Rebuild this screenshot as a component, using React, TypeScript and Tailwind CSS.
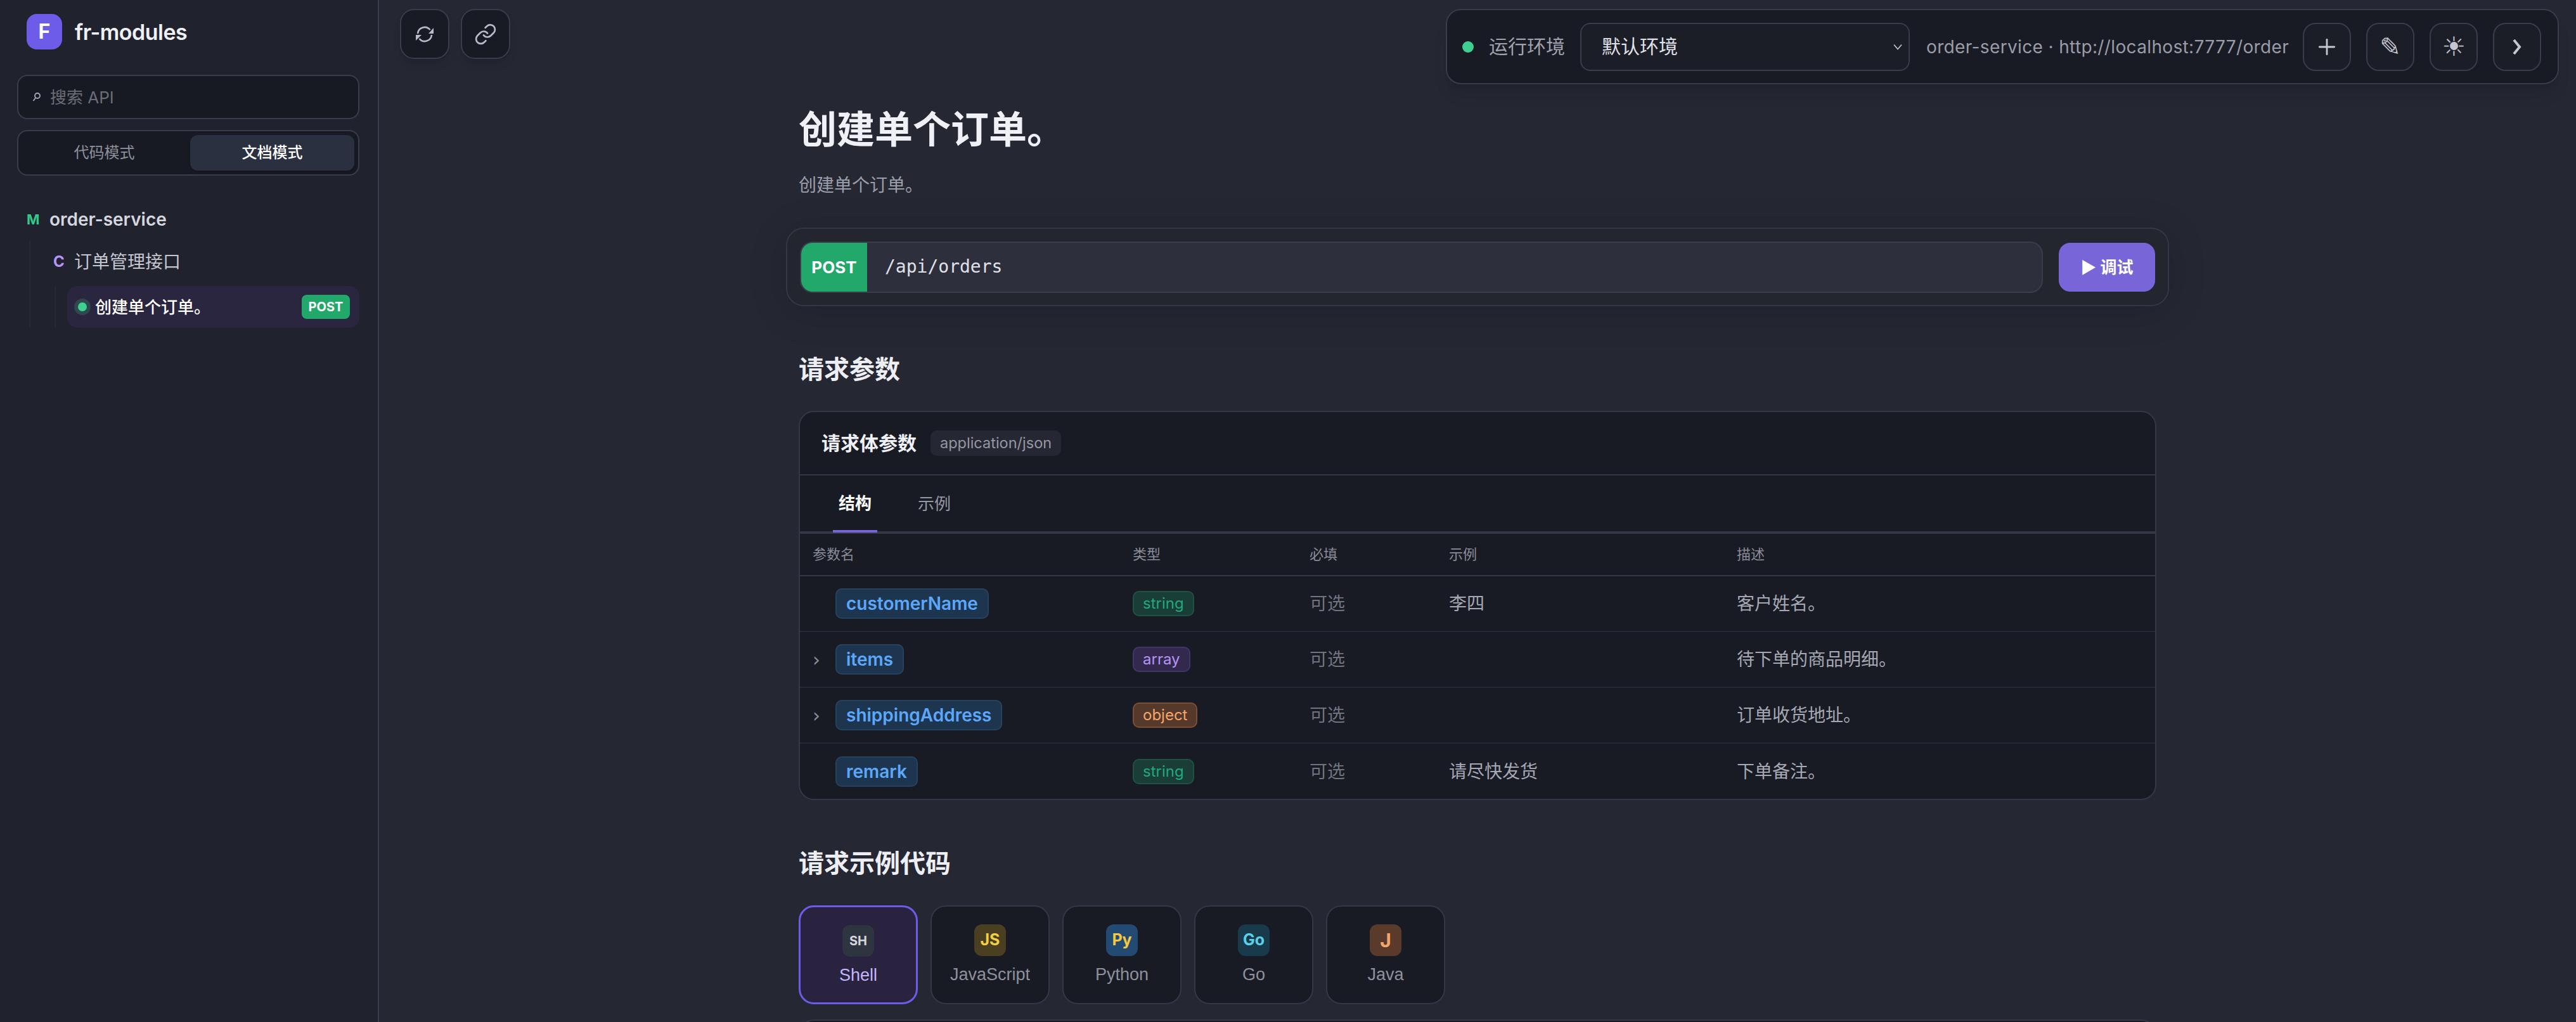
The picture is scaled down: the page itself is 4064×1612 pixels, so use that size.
import { Link, Plus } from "lucide-react";

const params = [
    { name: "customerName", type: "string", sample: "李四", desc: "客户姓名。", expand: false },
    { name: "items", type: "array", sample: "", desc: "待下单的商品明细。", expand: true },
    { name: "shippingAddress", type: "object", sample: "", desc: "订单收货地址。", expand: true },
    { name: "remark", type: "string", sample: "请尽快发货", desc: "下单备注。", expand: false },
];

const typeStyles: Record<string, string> = {
    string: "bg-[#1b3d38] border-[#1f5243] text-[#1fa97d]",
    array: "bg-[#33294f] border-[#42356a] text-[#b794f6]",
    object: "bg-[#55392b] border-[#7a4f33] text-[#f6a56c]",
};

const languages = [
    { label: "Shell", badge: "SH", badgeStyle: "bg-[#2f3540] text-[#d4d6dc] text-[20px]" },
    { label: "JavaScript", badge: "JS", badgeStyle: "bg-[#4a3f20] text-[#f0cf45] text-[25px]" },
    { label: "Python", badge: "Py", badgeStyle: "bg-[#234a72] text-[#f5c842] text-[25px]" },
    { label: "Go", badge: "Go", badgeStyle: "bg-[#193a4a] text-[#5ad1ea] text-[25px]" },
    { label: "Java", badge: "J", badgeStyle: "bg-[#5a3a2a] text-[#f6a56c] text-[30px]" },
];

function SyncIcon() {
    return (
        <svg width="28" height="28" viewBox="0 0 28 28" fill="none" stroke="currentColor" strokeWidth="2.6">
            <path d="M3 13A11 11 0 0 1 22.5 7" />
            <path d="M25 15A11 11 0 0 1 5.5 21" />
            <path d="M28 4V13H20Z" fill="currentColor" stroke="none" />
            <path d="M0 15H9L0 24Z" fill="currentColor" stroke="none" />
        </svg>
    );
}

function Sidebar() {
    return (
        <aside className="w-[598px] shrink-0 h-full bg-[#20222e] border-r-2 border-[#393c4b] pl-[27px] pr-[29px]">
            {/* Brand */}
            <div className="flex items-center gap-[20px] pl-[15px] pt-[22px]">
                <div className="w-[56px] h-[56px] rounded-[16px] bg-[#6c5ce7] flex items-center justify-center text-white font-bold text-[32px]">F</div>
                <span className="text-[34px] font-semibold text-[#f0f1f7] tracking-[-0.5px]">fr-modules</span>
            </div>

            {/* Search */}
            <div className="mt-[40px] h-[70px] rounded-[16px] border-2 border-[#393c4b] bg-[#181a23] flex items-center pl-[22px] gap-[15px]">
                <svg width="13" height="16" viewBox="0 0 13 16" fill="none" stroke="#a9abb6" strokeWidth="1.8" className="shrink-0">
                    <circle cx="8" cy="6" r="4" />
                    <path d="M5 9.5 1.5 14" />
                </svg>
                <span className="text-[26px] text-[#6b6d76]">搜索 API</span>
            </div>

            {/* Mode toggle */}
            <div className="mt-[17px] h-[72px] rounded-[16px] border-2 border-[#393c4b] bg-[#181a23] grid grid-cols-2 p-[6px] gap-[6px]">
                <div className="flex items-center justify-center text-[24px] text-[#8e909c]">代码模式</div>
                <div className="flex items-center justify-center text-[24px] text-white font-medium bg-[#2b3040] rounded-[12px] shadow-md">文档模式</div>
            </div>

            {/* Tree */}
            <div className="mt-[50px]">
                <div className="flex items-center h-[38px] pl-[15px]">
                    <span className="w-[36px] text-[22px] font-bold text-[#34c98a]">M</span>
                    <span className="text-[28px] font-semibold text-[#d5d6de]">order-service</span>
                </div>
                <div className="mt-[14px] ml-[19px] border-l-2 border-[#282a37]">
                    <div className="flex items-center h-[68px] pl-[36px]">
                        <span className="w-[33px] text-[24px] font-bold text-[#b794f6]">C</span>
                        <span className="text-[28px] text-[#c5c6d0]">订单管理接口</span>
                    </div>
                    <div className="ml-[38px] border-l-2 border-[#282a37] pl-[18px] mt-[4px]">
                        <div className="h-[66px] rounded-[16px] bg-[#2b2640] flex items-center pl-[17px] pr-[15px]">
                            <span className="w-[14px] h-[14px] rounded-full bg-[#3fcf8e] ring-[6px] ring-[#3fcf8e]/20" />
                            <span className="ml-[13px] text-[26px] text-white font-medium">创建单个订单。</span>
                            <span className="ml-auto w-[76px] h-[38px] rounded-[8px] bg-[#22a86b] flex items-center justify-center text-white text-[20px] font-bold">POST</span>
                        </div>
                    </div>
                </div>
            </div>
        </aside>
    );
}

function ToolButton({ children }: { children: React.ReactNode }) {
    return (
        <button className="w-[78px] h-[79px] rounded-[22px] border-2 border-[#393c4b] bg-[#191b24] flex items-center justify-center text-[#b9bbc6] shadow-lg">
            {children}
        </button>
    );
}

function HeaderButton({ children, className }: { children: React.ReactNode; className?: string }) {
    return (
        <button className={`w-[76px] h-[76px] rounded-[20px] border-2 border-[#393c4b] bg-[#1b1d27] flex items-center justify-center text-[#c4c6d0] font-['DejaVu_Sans'] ${className ?? ""}`}>
            {children}
        </button>
    );
}

function EnvPanel() {
    return (
        <div className="absolute top-[14px] right-[27px] h-[119px] w-[1756px] rounded-[24px] border-2 border-[#393c4b] bg-[#181b23] flex items-center pl-[24px] pr-[26px] shadow-xl">
            <span className="w-[18px] h-[18px] rounded-full bg-[#3fcf8e]" />
            <span className="ml-[24px] text-[30px] text-[#a0a2ae]">运行环境</span>
            <div className="ml-[24px] w-[520px] h-[76px] rounded-[16px] border-2 border-[#393c4b] bg-[#1b1d27] flex items-center justify-between pl-[32px] pr-[10px]">
                <span className="text-[30px] text-[#e0e1e8]">默认环境</span>
                <svg width="14" height="10" viewBox="0 0 14 10" fill="none" stroke="#c4c6d0" strokeWidth="1.6"><path d="M1 1.5 7 8.5 13 1.5" /></svg>
            </div>
            <span className="ml-[26px] text-[28px] tracking-[0.36px] text-[#9a9ca8] whitespace-nowrap">order-service · http://localhost:7777/order</span>
            <div className="ml-auto flex gap-[24px]">
                <HeaderButton><Plus size={40} strokeWidth={1.7} /></HeaderButton>
                <HeaderButton className="text-[40px]">✎</HeaderButton>
                <HeaderButton className="text-[42px]">☀</HeaderButton>
                <HeaderButton>
                    <svg width="14" height="24" viewBox="0 0 14 24" fill="none" stroke="currentColor" strokeWidth="4"><path d="M2 1 11 12 2 23" /></svg>
                </HeaderButton>
            </div>
        </div>
    );
}

function ParamsTable() {
    return (
        <div className="mt-[37px] rounded-[24px] border-2 border-[#343746] bg-[#181b24] overflow-hidden">
            <div className="h-[100px] flex items-center pl-[34px] gap-[22px] border-b-2 border-[#343746]">
                <span className="text-[30px] font-bold text-[#f0f1f7]">请求体参数</span>
                <span className="h-[40px] px-[15px] rounded-[10px] bg-[#252733] text-[23.5px] text-[#9597a3] flex items-center">application/json</span>
            </div>
            <div className="h-[92px] flex pl-[52px] gap-[55px] border-b-4 border-[#343746]">
                <div className="w-[70px] flex items-center justify-center text-[26px] font-bold text-white border-b-4 border-[#7866d8] -mb-[2px]">结构</div>
                <div className="w-[70px] flex items-center justify-center text-[26px] text-[#9597a3]">示例</div>
            </div>
            <div className="grid grid-cols-[505px_279px_220px_454px_1fr] h-[67px] items-center pl-[20px] border-b-2 border-[#343746] text-[22px] text-[#8a8c98]">
                <span>参数名</span>
                <span>类型</span>
                <span>必填</span>
                <span>示例</span>
                <span>描述</span>
            </div>
            {params.map((p, i) => (
                <div key={p.name} className={`grid grid-cols-[505px_279px_220px_454px_1fr] items-center pl-[20px] ${i < params.length - 1 ? "h-[88px] border-b-2 border-[#252833]" : "h-[87px]"}`}>
                    <div className="flex items-center">
                        <span className="w-[36px] text-[30px] text-[#8a8c98] font-['DejaVu_Sans']">{p.expand ? "›" : ""}</span>
                        <span className="h-[48px] px-[15px] rounded-[10px] border-2 border-[#27425f] bg-[#1e3550] text-[28px] font-semibold text-[#5ba8fa] flex items-center">{p.name}</span>
                    </div>
                    <div className="flex">
                        <span className={`h-[40px] px-[14px] rounded-[10px] border-2 text-[24px] flex items-center ${typeStyles[p.type]}`}>{p.type}</span>
                    </div>
                    <span className="text-[28px] text-[#71737f]">可选</span>
                    <span className="text-[28px] text-[#a6a8b3]">{p.sample}</span>
                    <span className="text-[28px] text-[#a6a8b3]">{p.desc}</span>
                </div>
            ))}
        </div>
    );
}

function LanguageTabs() {
    return (
        <div className="mt-[38px] flex gap-[20px]">
            {languages.map((l, i) => (
                <div
                    key={l.label}
                    className={`w-[188px] h-[156px] rounded-[24px] flex flex-col items-center pt-[28px] gap-[9px] border-2 ${i === 0 ? "border-[3px] border-[#6c5ce7] bg-[#292340]" : "border-[#343746] bg-[#191b24]"}`}
                >
                    <span className={`w-[50px] h-[50px] rounded-[12px] flex items-center justify-center font-bold ${l.badgeStyle}`}>{l.badge}</span>
                    <span className={`text-[27px] font-['Liberation_Sans'] ${i === 0 ? "text-[#c4b5fd]" : "text-[#8e909c]"}`}>{l.label}</span>
                </div>
            ))}
        </div>
    );
}

export default function App() {
    return (
        <div className="h-[1612px] w-[4064px] flex overflow-hidden bg-[#252733] font-['Inter','Noto_Sans_CJK_SC',sans-serif]">
            <Sidebar />
            <main className="relative flex-1 min-w-0 h-full overflow-hidden">
                {/* Floating tools */}
                <div className="absolute top-[14px] left-[33px] flex gap-[18px]">
                    <ToolButton><SyncIcon /></ToolButton>
                    <ToolButton><Link size={36} strokeWidth={1.8} /></ToolButton>
                </div>
                <EnvPanel />

                <div className="w-[2142px] mx-auto pt-[162px]">
                    <h1 className="text-[60px] leading-[84px] font-bold text-[#f0f1f7]">创建单个订单。</h1>
                    <p className="mt-[26px] text-[28px] leading-[40px] text-[#9c9eaa]">创建单个订单。</p>

                    {/* URL bar */}
                    <div className="mt-[47px] -mx-[20px] h-[124px] rounded-[28px] border-2 border-[#343746] bg-[#23252f] flex items-center pl-[20px] pr-[20px] gap-[25px] shadow-[0_8px_60px_rgba(0,0,0,0.15)]">
                        <div className="flex-1 h-[81px] flex rounded-[20px] border-2 border-[#393c4b] bg-[#2d303c] overflow-hidden">
                            <span className="w-[104px] bg-[#22a86b] text-white text-[26px] font-bold flex items-center justify-center">POST</span>
                            <span className="ml-[28px] self-center text-[28px] text-[#e0e1e8] font-['DejaVu_Sans_Mono']">/api/orders</span>
                        </div>
                        <button className="w-[152px] h-[77px] rounded-[18px] bg-[#7866d8] text-white text-[26px] font-bold flex items-center justify-center">▶ 调试</button>
                    </div>

                    <h2 className="mt-[72px] text-[40px] leading-[56px] font-bold text-[#eeeff5]">请求参数</h2>
                    <ParamsTable />

                    <h2 className="mt-[72px] text-[40px] leading-[56px] font-bold text-[#eeeff5]">请求示例代码</h2>
                    <LanguageTabs />
                    <div className="mt-[24px] h-[200px] rounded-[24px] border-2 border-[#343746] bg-[#181b24]" />
                </div>
            </main>
        </div>
    );
}
